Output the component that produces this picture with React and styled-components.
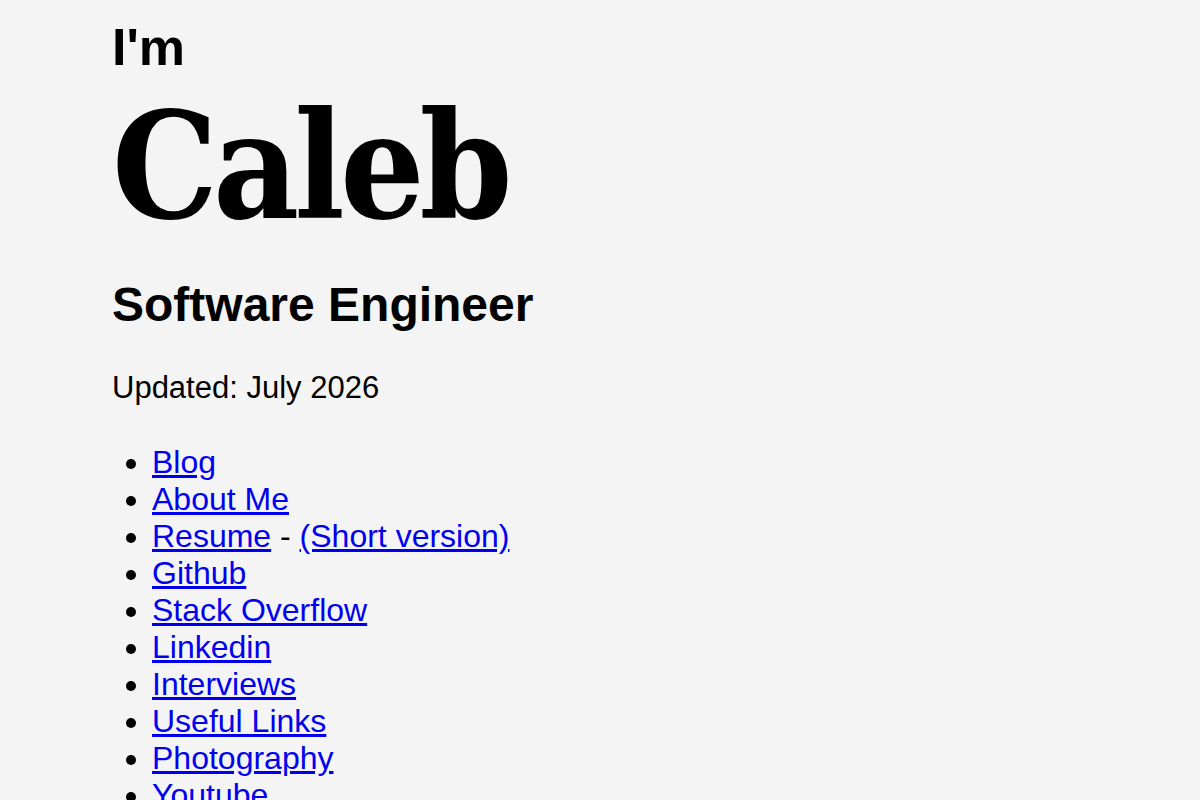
import React from 'react';
import styled, { createGlobalStyle } from 'styled-components';

const GlobalStyle = createGlobalStyle`
  html, body {
    margin: 0;
    padding: 0;
    background: #f4f4f4;
  }
  body {
    font-family: "Liberation Sans", Arial, sans-serif;
    color: #000;
  }
`

const Page = styled.main`
  padding: 0 112px;
`
const Intro = styled.h2`
  margin: 0;
  padding-top: 17px;
  font-size: 52px;
  font-weight: bold;
  line-height: normal;
`
const Name = styled.h1`
  margin: 15px 0 0;
  font-family: "DejaVu Serif", serif;
  font-stretch: condensed;
  font-size: 148px;
  font-weight: bold;
  letter-spacing: -5px;
  line-height: 1;
`
const Title = styled.h3`
  margin: 37px 0 0;
  font-size: 48px;
  font-weight: bold;
  line-height: normal;
`
const Updated = styled.p`
  margin: 38px 0 0;
  font-size: 31px;
  line-height: normal;
`
const Links = styled.ul`
  margin: 38px 0 0;
  padding-left: 40px;
  font-size: 32px;
  line-height: 37px;
`
const Item = styled.li`
  list-style: disc;
`
const Link = styled.a`
  color: #0000ee;
  text-decoration: underline;
`

const links = [
  'Blog',
  'About Me',
  'Resume',
  'Github',
  'Stack Overflow',
  'Linkedin',
  'Interviews',
  'Useful Links',
  'Photography',
  'Youtube',
];

export default function App() {
  return (
    <>
      <GlobalStyle />
      <Page>
        <Intro>I'm</Intro>
        <Name>Caleb</Name>
        <Title>Software Engineer</Title>
        <Updated>Updated: July 2026</Updated>
        <Links>
          {links.map((label) => (
            <Item key={label}>
              <Link href="#">{label}</Link>
              {label === 'Resume' && (
                <> - <Link href="#">(Short version)</Link></>
              )}
            </Item>
          ))}
        </Links>
      </Page>
    </>
  );
}
